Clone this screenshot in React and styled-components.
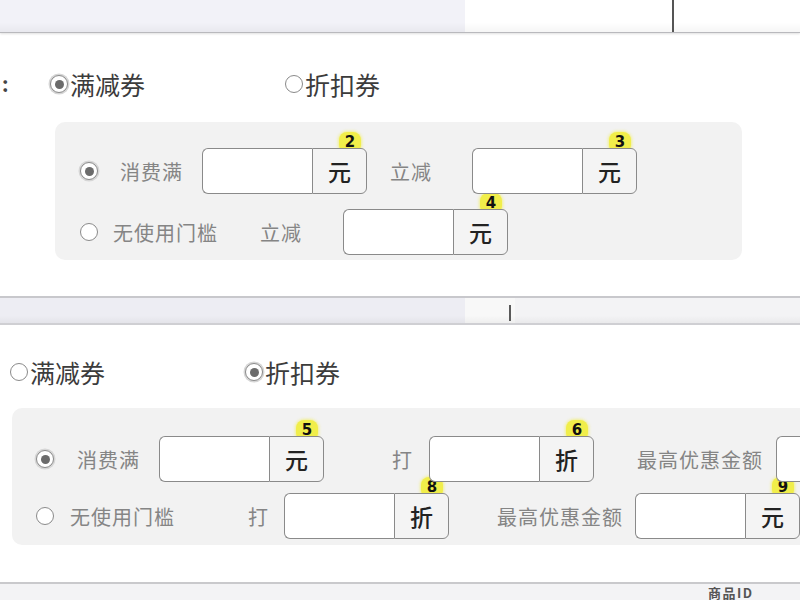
import React from "react";
import styled, { createGlobalStyle, css } from "styled-components";

const Global = createGlobalStyle`
  html, body { margin: 0; padding: 0; background: #fff; }
  body {
    width: 800px; height: 600px; overflow: hidden;
    font-family: "Noto Sans CJK SC", "Noto Sans", sans-serif;
  }
`;

const Page = styled.div`
  width: 800px;
  height: 600px;
  display: flex;
  flex-direction: column;
  overflow: hidden;
`;

const TopBar = styled.div`
  height: 32px;
  flex: none;
  display: flex;
  border-bottom: 1px solid #b9b9bd;
  box-shadow: 0 1px 2px rgba(0,0,0,0.12);
  position: relative;
  z-index: 1;
`;

const BarCell = styled.div`
  width: ${(p) => p.$w || "auto"};
  flex: ${(p) => (p.$w ? "none" : "1")};
  background: ${(p) => p.$bg || "#fff"};
  border-right: ${(p) => (p.$line ? `${p.$line}` : "none")};
  background-image: linear-gradient(to bottom, rgba(255,255,255,0) 70%, rgba(0,0,0,0.04));
  position: relative;
`;

const Tick = styled.div`
  position: absolute;
  left: ${(p) => p.$x}px;
  top: ${(p) => p.$top}px;
  width: 2px;
  height: ${(p) => p.$h}px;
  background: #5a5a5a;
`;

const Panel = styled.div`
  height: ${(p) => p.$h}px;
  flex: none;
  background: #fff;
  padding-top: ${(p) => p.$pt}px;
  box-sizing: border-box;
  overflow: hidden;
`;

const TypeRow = styled.div`
  display: flex;
  align-items: center;
  height: 30px;
`;

const Colon = styled.div`
  width: 50px;
  padding-left: 2px;
  box-sizing: border-box;
  font-size: 20px;
  font-weight: 700;
  color: #444;
  line-height: 30px;
`;

const TypeOption = styled.label`
  width: 235px;
  display: flex;
  align-items: center;
  gap: 2px;
  font-size: 25px;
  color: #3c3c3c;
  line-height: 30px;
  margin-left: ${(p) => p.$ml || 0}px;
`;

const Radio = styled.span`
  flex: none;
  width: ${(p) => p.$size || 18}px;
  height: ${(p) => p.$size || 18}px;
  box-sizing: border-box;
  border-radius: 50%;
  border: 1.5px solid #8a8a8a;
  background: #fff;
  position: relative;
  ${(p) =>
    p.$checked &&
    css`
      box-shadow: 0 0 0 1.5px #d6d6d6;
      &::after {
        content: "";
        position: absolute;
        left: 50%;
        top: 50%;
        width: 9px;
        height: 9px;
        margin: -4.5px 0 0 -4.5px;
        border-radius: 50%;
        background: #6b6b6b;
      }
    `}
`;

const Box = styled.div`
  margin-top: ${(p) => p.$mt}px;
  margin-left: ${(p) => p.$ml}px;
  width: ${(p) => (p.$w ? `${p.$w}px` : "max-content")};
  background: #f2f2f2;
  border-radius: 10px;
  padding: ${(p) => p.$pad};
  box-sizing: border-box;
  display: flex;
  flex-direction: column;
  gap: ${(p) => p.$gap}px;
`;

const Row = styled.div`
  display: flex;
  align-items: center;
  height: 46px;
`;

const Label = styled.span`
  flex: none;
  margin-left: ${(p) => p.$ml || 0}px;
  width: ${(p) => p.$w}px;
  font-size: 20px;
  color: #858585;
  white-space: nowrap;
  letter-spacing: 1px;
`;

const Group = styled.div`
  flex: none;
  position: relative;
  display: flex;
  height: 46px;
  width: 165px;
  margin-left: ${(p) => p.$ml || 0}px;
`;

const Field = styled.div`
  position: relative;
  z-index: 1;
  width: 110px;
  height: 100%;
  box-sizing: border-box;
  background: #fff;
  border: 1.5px solid #8a8a8a;
  border-right: none;
  border-radius: 6px 0 0 6px;
`;

const Addon = styled.div`
  position: relative;
  z-index: 1;
  flex: 1;
  height: 100%;
  box-sizing: border-box;
  background: #f4f4f4;
  border: 1.5px solid #8a8a8a;
  border-radius: 0 6px 6px 0;
  display: flex;
  align-items: center;
  justify-content: center;
  font-size: 23px;
  font-weight: 500;
  color: #222;
`;

const Badge = styled.span`
  position: absolute;
  z-index: 0;
  right: 6px;
  top: -16px;
  width: 22px;
  height: 21px;
  border-radius: 8px;
  background: #f1ee4a;
  box-shadow: 0 0 3px 1px rgba(241, 238, 74, 0.6);
  font-family: "DejaVu Sans", sans-serif;
  font-weight: 700;
  font-size: 15px;
  line-height: 20px;
  text-align: center;
  color: #111;
`;

const Divider = styled.div`
  height: 29px;
  flex: none;
  display: flex;
  border-top: 2px solid #c8c8cc;
  border-bottom: 2px solid #cfcfd3;
  box-sizing: border-box;
  position: relative;
`;

const Footer = styled.div`
  flex: 1;
  border-top: 2px solid #c9c9cc;
  background: #f3f3f5;
  display: flex;
  align-items: center;
  padding-left: 708px;
  box-sizing: border-box;
`;

const FooterText = styled.span`
  font-size: 13px;
  font-weight: 700;
  color: #555;
  line-height: 15px;
  letter-spacing: 1.5px;
`;

function Input({ ml, unit, badge }) {
  return (
    <Group $ml={ml}>
      {badge && <Badge>{badge}</Badge>}
      <Field />
      <Addon>{unit}</Addon>
    </Group>
  );
}

export default function App() {
  return (
    <Page>
      <Global />
      <TopBar>
        <BarCell $w="465px" $bg="#f2f2f8" />
        <BarCell $w="207px" $bg="#fff" $line="2px solid #555" />
        <BarCell $bg="#fff" />
      </TopBar>

      <Panel $h={263} $pt={36}>
        <TypeRow>
          <Colon>:</Colon>
          <TypeOption>
            <Radio $size={18} $checked />
            满减券
          </TypeOption>
          <TypeOption>
            <Radio $size={18} />
            折扣券
          </TypeOption>
        </TypeRow>
        <Box $mt={23} $ml={55} $w={687} $pad="26px 0 5px 25px" $gap={15}>
          <Row>
            <Radio $checked />
            <Label $ml={22} $w={82}>消费满</Label>
            <Input unit="元" badge="2" />
            <Label $ml={23} $w={82}>立减</Label>
            <Input unit="元" badge="3" />
          </Row>
          <Row>
            <Radio />
            <Label $ml={15} $w={147}>无使用门槛</Label>
            <Label $w={83}>立减</Label>
            <Input unit="元" badge="4" />
          </Row>
        </Box>
      </Panel>

      <Divider>
        <BarCell $w="465px" $bg="#ededf3" />
        <BarCell $w="50px" $bg="#f8f8f8" />
        <BarCell $bg="#f3f3f5" />
        <Tick $x={509} $top={7} $h={16} />
      </Divider>

      <Panel $h={257} $pt={32}>
        <TypeRow>
          <TypeOption $ml={10}>
            <Radio $size={18} />
            满减券
          </TypeOption>
          <TypeOption>
            <Radio $size={18} $checked />
            折扣券
          </TypeOption>
        </TypeRow>
        <Box $mt={21} $ml={12} $pad="28px 30px 6px 24px" $gap={11}>
          <Row>
            <Radio $checked />
            <Label $ml={23} $w={82}>消费满</Label>
            <Input unit="元" badge="5" />
            <Label $ml={68} $w={37}>打</Label>
            <Input unit="折" badge="6" />
            <Label $ml={43} $w={139}>最高优惠金额</Label>
            <Input unit="元" />
          </Row>
          <Row>
            <Radio />
            <Label $ml={16} $w={178}>无使用门槛</Label>
            <Label $w={36}>打</Label>
            <Input unit="折" badge="8" />
            <Label $ml={48} $w={138}>最高优惠金额</Label>
            <Input unit="元" badge="9" />
          </Row>
        </Box>
      </Panel>

      <Footer>
        <FooterText>商品ID</FooterText>
      </Footer>
    </Page>
  );
}
